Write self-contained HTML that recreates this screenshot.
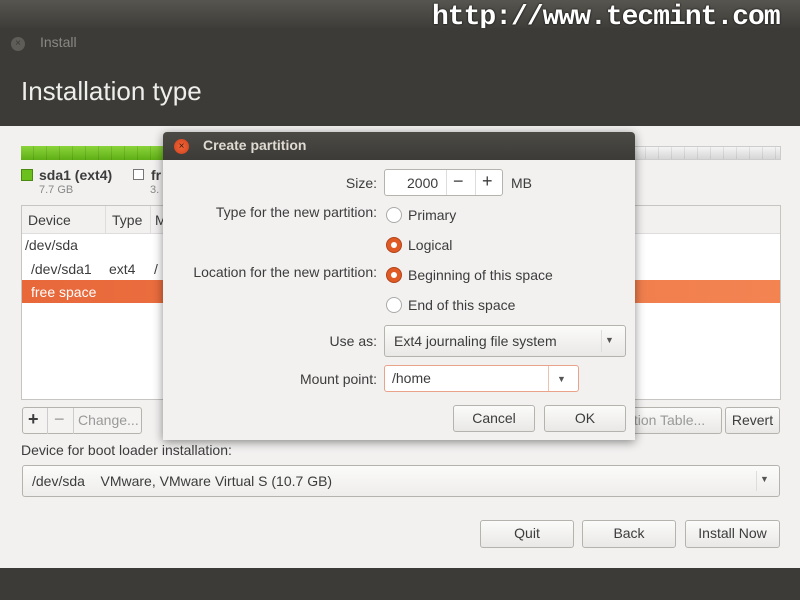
<!DOCTYPE html>
<html><head><meta charset="utf-8"><style>
*{box-sizing:border-box;margin:0;padding:0}
body{width:800px;height:600px;overflow:hidden;position:relative;background:#3c3b37;font-family:"Liberation Sans",sans-serif;font-size:14px;color:#3c3c3c}
.a{position:absolute}
.r{position:absolute;right:423px;text-align:right;white-space:nowrap}
.btn{position:absolute;border:1px solid #b5b3ae;border-radius:3px;background:linear-gradient(#fbfbfa,#e9e8e6);text-align:center;font-size:14px;color:#3c3c3c;line-height:24px}
.radio{position:absolute;width:16px;height:16px;border-radius:50%;border:1px solid #aaa;background:#fff}
.radio.on{background:#e05a25;border-color:#b0441a}
.radio.on::after{content:"";position:absolute;left:4px;top:4px;width:6px;height:6px;border-radius:50%;background:#fff}
</style></head><body>
<div class="a" style="left:0;top:0;width:800px;height:28px;background:linear-gradient(#57554f,#3e3d39)"></div>
<div class="a" style="left:432px;top:2px;font:bold 28px 'Liberation Mono',monospace;color:#fff;letter-spacing:-1px;text-shadow:0 0 2px #000">http://www.tecmint.com</div>
<div class="a" style="left:0;top:28px;width:800px;height:98px;background:#3c3b37"></div>
<div class="a" style="left:11px;top:37px;width:14px;height:14px;border-radius:50%;background:#5e5d58;color:#3c3b37;font-size:10px;text-align:center;line-height:14px">×</div>
<div class="a" style="left:40px;top:34px;color:#8a8883;font-size:14px">Install</div>
<div class="a" style="left:21px;top:76px;color:#eeeeec;font-size:26px">Installation type</div>
<div class="a" style="left:0;top:126px;width:800px;height:442px;background:#f2f1f0"></div>
<div class="a" style="left:21px;top:146px;width:760px;height:14px;background:repeating-linear-gradient(90deg,transparent 0 12px,rgba(0,0,0,.08) 12px 13px),linear-gradient(#f4f4f4,#d6d6d6);border:1px solid #ccc"></div>
<div class="a" style="left:21px;top:146px;width:145px;height:14px;background:repeating-linear-gradient(90deg,transparent 0 12px,rgba(0,0,0,.1) 12px 13px),linear-gradient(#8ad43a,#5fae16)"></div>
<div class="a" style="left:21px;top:169px;width:12px;height:12px;background:#6cc01e;border:1px solid #4a8a10"></div>
<div class="a" style="left:39px;top:167px;font-weight:bold;font-size:14px">sda1 (ext4)</div>
<div class="a" style="left:39px;top:184px;font-size:11px;color:#888">7.7 GB</div>
<div class="a" style="left:133px;top:169px;width:11px;height:11px;border:1px solid #777;background:#fff"></div>
<div class="a" style="left:151px;top:167px;font-weight:bold">fr</div>
<div class="a" style="left:150px;top:184px;font-size:11px;color:#888">3.</div>
<div class="a" style="left:21px;top:205px;width:760px;height:195px;background:#fff;border:1px solid #c7c5c1"></div>
<div class="a" style="left:22px;top:206px;width:758px;height:28px;background:#f2f1f0;border-bottom:1px solid #ddd"></div>
<div class="a" style="left:28px;top:212px">Device</div>
<div class="a" style="left:105px;top:206px;height:28px;border-left:1px solid #ddd"></div>
<div class="a" style="left:112px;top:212px">Type</div>
<div class="a" style="left:150px;top:206px;height:28px;border-left:1px solid #ddd"></div>
<div class="a" style="left:155px;top:212px">M</div>
<div class="a" style="left:25px;top:237px">/dev/sda</div>
<div class="a" style="left:31px;top:261px">/dev/sda1</div>
<div class="a" style="left:109px;top:261px">ext4</div>
<div class="a" style="left:154px;top:261px">/</div>
<div class="a" style="left:22px;top:280px;width:758px;height:23px;background:linear-gradient(90deg,#e8683a,#f38452)"></div>
<div class="a" style="left:31px;top:284px;color:#fff">free space</div>
<div class="btn" style="left:22px;top:407px;width:120px;height:27px;background:#f4f3f2"></div>
<div class="a" style="left:28px;top:409px;font-size:18px;font-weight:bold">+</div>
<div class="a" style="left:47px;top:408px;height:26px;border-left:1px solid #ccc"></div>
<div class="a" style="left:54px;top:409px;font-size:18px;color:#999">−</div>
<div class="a" style="left:73px;top:408px;height:26px;border-left:1px solid #ccc"></div>
<div class="a" style="left:78px;top:412px;color:#999">Change...</div>
<div class="btn" style="left:610px;top:407px;width:112px;height:27px;color:#999">tition Table...</div>
<div class="btn" style="left:725px;top:407px;width:55px;height:27px">Revert</div>
<div class="a" style="left:21px;top:442px">Device for boot loader installation:</div>
<div class="btn" style="left:22px;top:465px;width:758px;height:32px;background:linear-gradient(#fbfbfa,#eeedeb);text-align:left;line-height:30px;padding-left:9px">/dev/sda&nbsp;&nbsp;&nbsp;&nbsp;VMware, VMware Virtual S (10.7 GB)</div>
<div class="a" style="left:756px;top:471px;height:20px;border-left:1px solid #ddd"></div>
<div class="a" style="left:760px;top:474px;font-size:9px;color:#555">▼</div>
<div class="btn" style="left:480px;top:520px;width:94px;height:28px">Quit</div>
<div class="btn" style="left:582px;top:520px;width:94px;height:28px">Back</div>
<div class="btn" style="left:685px;top:520px;width:95px;height:28px">Install Now</div>
<div class="a" style="left:0;top:568px;width:800px;height:32px;background:#3c3b37"></div>
<!-- dialog -->
<div class="a" style="left:163px;top:132px;width:472px;height:308px;box-shadow:0 2px 10px rgba(0,0,0,.45);border-radius:4px 4px 0 0"></div>
<div class="a" style="left:163px;top:132px;width:472px;height:28px;background:linear-gradient(#4b4a45,#3c3b37);border-radius:4px 4px 0 0"></div>
<div class="a" style="left:174px;top:139px;width:15px;height:15px;border-radius:50%;background:radial-gradient(#f2673a,#d1401b);color:#3c1a0a;font-size:10px;text-align:center;line-height:15px">×</div>
<div class="a" style="left:203px;top:137px;color:#dfdbd2;font-weight:bold;font-size:14px">Create partition</div>
<div class="a" style="left:163px;top:160px;width:472px;height:280px;background:#f2f1f0"></div>
<div class="r" style="top:175px">Size:</div>
<div class="btn" style="left:384px;top:169px;width:119px;height:27px;background:#fff"></div>
<div class="a" style="left:407px;top:175px">2000</div>
<div class="a" style="left:446px;top:170px;height:25px;border-left:1px solid #ddd"></div>
<div class="a" style="left:453px;top:171px;font-size:18px">−</div>
<div class="a" style="left:475px;top:170px;height:25px;border-left:1px solid #ddd"></div>
<div class="a" style="left:482px;top:171px;font-size:18px">+</div>
<div class="a" style="left:511px;top:175px">MB</div>
<div class="r" style="top:204px">Type for the new partition:</div>
<div class="radio" style="left:386px;top:207px"></div>
<div class="a" style="left:408px;top:207px">Primary</div>
<div class="radio on" style="left:386px;top:237px"></div>
<div class="a" style="left:408px;top:237px">Logical</div>
<div class="r" style="top:264px">Location for the new partition:</div>
<div class="radio on" style="left:386px;top:267px"></div>
<div class="a" style="left:408px;top:267px">Beginning of this space</div>
<div class="radio" style="left:386px;top:297px"></div>
<div class="a" style="left:408px;top:297px">End of this space</div>
<div class="r" style="top:333px">Use as:</div>
<div class="btn" style="left:384px;top:325px;width:242px;height:32px;text-align:left;line-height:30px;padding-left:9px">Ext4 journaling file system</div>
<div class="a" style="left:601px;top:330px;height:22px;border-left:1px solid #ddd"></div>
<div class="a" style="left:605px;top:335px;font-size:9px;color:#555">▼</div>
<div class="r" style="top:371px">Mount point:</div>
<div class="btn" style="left:384px;top:365px;width:195px;height:27px;background:#fff;border-color:#e8a38a;text-align:left;padding-left:7px">/home</div>
<div class="a" style="left:548px;top:366px;height:25px;border-left:1px solid #f0c0b0"></div>
<div class="a" style="left:557px;top:374px;font-size:9px;color:#555">▼</div>
<div class="btn" style="left:453px;top:405px;width:82px;height:27px">Cancel</div>
<div class="btn" style="left:544px;top:405px;width:82px;height:27px">OK</div>
</body></html>
